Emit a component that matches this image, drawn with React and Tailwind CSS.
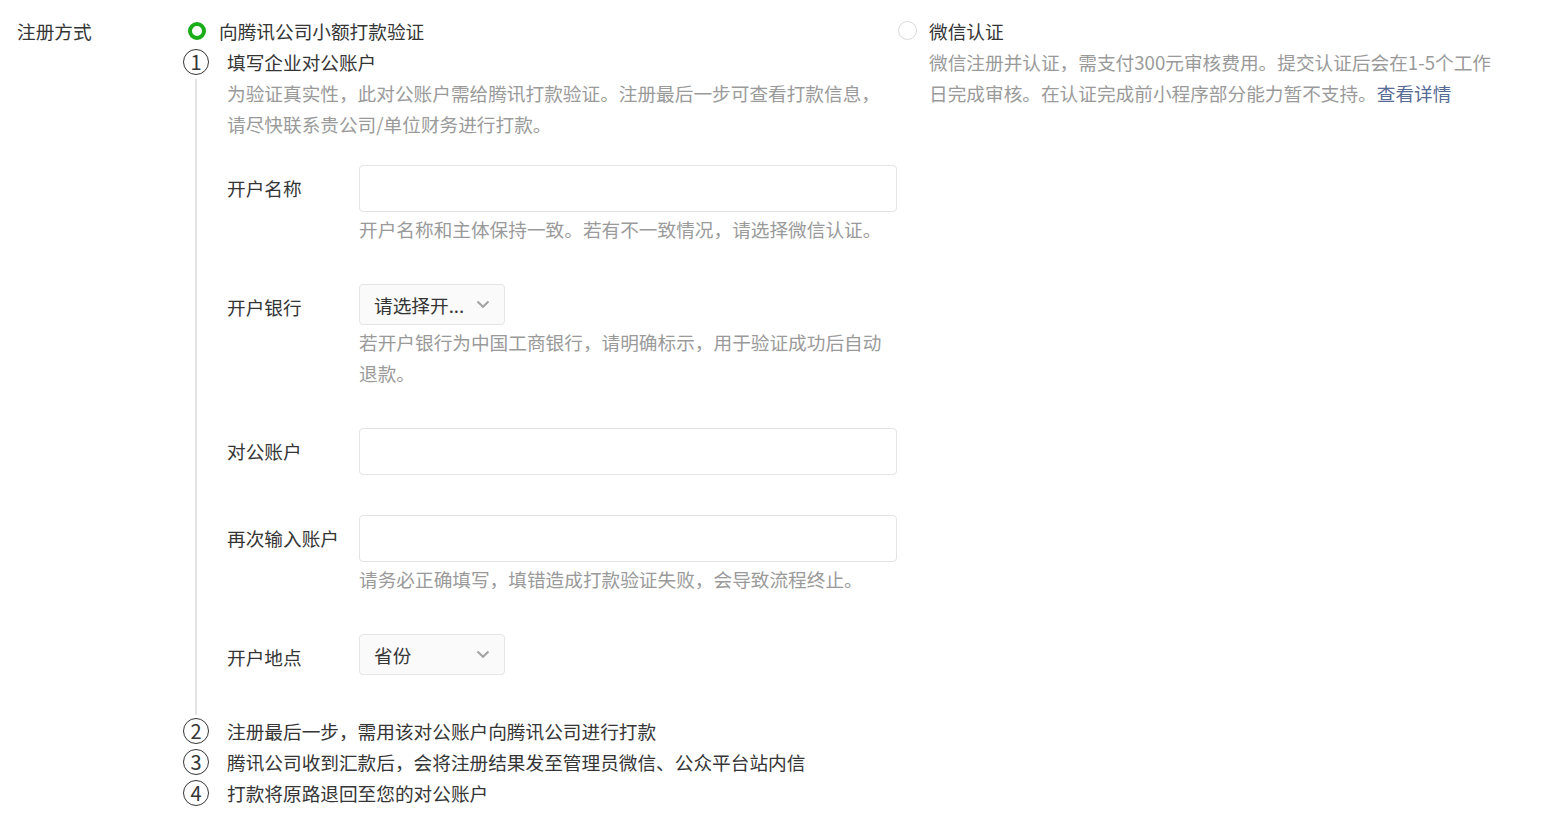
import React from "react";

const font = {
  fontFamily: '"Noto Sans CJK SC", "Microsoft YaHei", "Noto Sans", sans-serif',
};

function StepBadge({ n }) {
  return (
    <div className="flex h-[31px] w-[26px] shrink-0 items-center justify-center">
      <div className="flex h-[26px] w-[26px] items-center justify-center rounded-full border border-[#353535] text-[20px] leading-none text-[#353535]">
        {n}
      </div>
    </div>
  );
}

function Chevron() {
  return (
    <svg width="14" height="9" viewBox="0 0 14 9" fill="none">
      <path d="M1.5 1.5 L7 6.8 L12.5 1.5" stroke="#a3a3a3" strokeWidth="2" />
    </svg>
  );
}

function TextInput() {
  return (
    <input
      type="text"
      className="h-[47px] w-[538px] rounded-[4px] border border-[#e4e4e4] bg-white px-[15px] text-[18.67px] outline-none"
    />
  );
}

function SelectBox({ value }) {
  return (
    <div className="flex h-[41px] w-[146px] items-center justify-between rounded-[4px] border border-[#e4e4e4] bg-[#fafafa] pl-[14px] pr-[14px]">
      <span className="text-[18.67px] text-[#353535]">{value}</span>
      <Chevron />
    </div>
  );
}

function FormRow({ label, children, hint, first }) {
  return (
    <div className={`flex items-start ${first ? "mt-[26px]" : ""} mb-[40px]`}>
      <div className="w-[132px] shrink-0 pt-[7px] text-[#353535]">{label}</div>
      <div className="flex w-[538px] flex-col">
        {children}
        {hint && <div className="mt-[1px] text-[#9a9a9a]">{hint}</div>}
      </div>
    </div>
  );
}

export default function App() {
  return (
    <div
      className="flex min-h-[832px] bg-white pt-[15px] text-[18.67px] leading-[31px] text-[#353535]"
      style={font}
    >
      <div className="w-[183px] shrink-0 pl-[17px]">注册方式</div>

      {/* Option: small payment verification */}
      <div className="w-[715px] shrink-0">
        <div className="flex items-center">
          <span className="ml-[5px] h-[18px] w-[18px] rounded-full border-[4px] border-[#1aad19]" />
          <span className="ml-[13px]">向腾讯公司小额打款验证</span>
        </div>

        <div className="flex">
          <div className="flex w-[26px] shrink-0 flex-col items-center">
            <StepBadge n="1" />
            <div className="mt-[2px] w-[2px] flex-1 bg-[#e3e3e3]" />
          </div>
          <div className="ml-[18px] w-[670px]">
            <div>填写企业对公账户</div>
            <div className="text-[#9a9a9a]">
              为验证真实性，此对公账户需给腾讯打款验证。注册最后一步可查看打款信息，请尽快联系贵公司/单位财务进行打款。
            </div>

            <FormRow first label="开户名称" hint="开户名称和主体保持一致。若有不一致情况，请选择微信认证。">
              <TextInput />
            </FormRow>
            <FormRow label="开户银行" hint="若开户银行为中国工商银行，请明确标示，用于验证成功后自动退款。">
              <SelectBox value="请选择开..." />
            </FormRow>
            <FormRow label="对公账户">
              <TextInput />
            </FormRow>
            <FormRow label="再次输入账户" hint="请务必正确填写，填错造成打款验证失败，会导致流程终止。">
              <TextInput />
            </FormRow>
            <div className="flex items-start">
              <div className="w-[132px] shrink-0 pt-[7px]">开户地点</div>
              <SelectBox value="省份" />
            </div>
            <div className="h-[40px]" />
          </div>
        </div>

        {[
          ["2", "注册最后一步，需用该对公账户向腾讯公司进行打款"],
          ["3", "腾讯公司收到汇款后，会将注册结果发至管理员微信、公众平台站内信"],
          ["4", "打款将原路退回至您的对公账户"],
        ].map(([n, t]) => (
          <div key={n} className="flex">
            <StepBadge n={n} />
            <div className="ml-[18px]">{t}</div>
          </div>
        ))}
      </div>

      {/* Option: WeChat certification */}
      <div className="flex-1">
        <div className="flex items-center">
          <span className="h-[19px] w-[19px] rounded-full border border-[#d9d9d9]" />
          <span className="ml-[12px]">微信认证</span>
        </div>
        <p className="ml-[31px] w-[576px] text-[#9a9a9a]">
          微信注册并认证，需支付300元审核费用。提交认证后会在1-5个工作日完成审核。在认证完成前小程序部分能力暂不支持。
          <span className="text-[#576b95]">查看详情</span>
        </p>
      </div>
    </div>
  );
}
